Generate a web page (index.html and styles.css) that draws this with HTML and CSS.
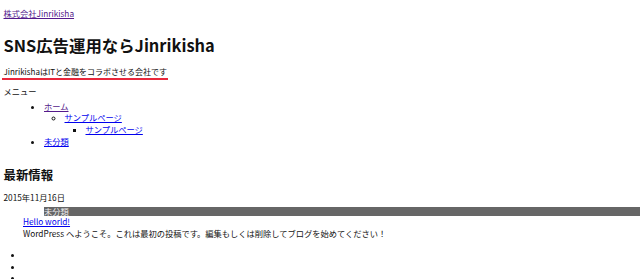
FILE: index.html
```html
<!DOCTYPE html>
<html lang="ja">
<head>
<meta charset="utf-8">
<title>株式会社Jinrikisha</title>
<link rel="stylesheet" href="styles.css">
</head>
<body>
<header class="site-header">
  <p class="site-name"><a class="visited" href="#">株式会社Jinrikisha</a></p>
  <h1 class="site-title">SNS広告運用ならJinrikisha</h1>
  <p class="tagline"><span class="tagline-text">JinrikishaはITと金融をコラボさせる会社です</span></p>
</header>
<nav class="menu">
  <div class="menu-label">メニュー</div>
  <ul class="menu-l1">
    <li><a class="visited" href="#">ホーム</a>
      <ul class="menu-l2">
        <li><a href="#">サンプルページ</a>
          <ul class="menu-l3">
            <li><a href="#">サンプルページ</a></li>
          </ul>
        </li>
      </ul>
    </li>
    <li><a href="#">未分類</a></li>
  </ul>
</nav>
<section class="news">
  <h2 class="news-title">最新情報</h2>
  <div class="post-date">2015年11月16日</div>
  <div class="post-cat">未分類</div>
  <div class="post-body">
    <a href="#">Hello world!</a>
    <p class="post-excerpt">WordPress へようこそ。これは最初の投稿です。編集もしくは削除してブログを始めてください！</p>
  </div>
  <ul class="empty-list">
    <li></li>
    <li></li>
    <li></li>
  </ul>
</section>
</body>
</html>
```

FILE: styles.css
```css
html, body {
  margin: 0;
  padding: 0;
}
body {
  padding: 0 3.5px;
  font-family: "Noto Sans CJK JP", "Noto Sans", sans-serif;
  font-size: 8.25px;
  line-height: 11.7px;
  color: #111;
  background: #fff;
  overflow: hidden;
}
a {
  color: #0000ee;
}
a.visited {
  color: #551a8b;
}
.site-name {
  margin: 7.5px 0 0;
}
.site-title {
  margin: 14px 0 0;
  font-size: 16.4px;
  line-height: 24px;
  font-weight: bold;
}
.tagline {
  margin: 9px 0 0;
}
.tagline-text {
  display: inline-block;
  margin-left: -2px;
  padding: 0 1px 0 2px;
  font-size: 8px;
  border-bottom: 2px solid #e8283c;
}
.menu {
  margin-top: 6px;
}
.menu ul {
  margin: 0;
  list-style: disc;
}
.menu-l1 {
  padding-left: 40.5px;
  margin-top: 3px !important;
}
.menu-l2 {
  padding-left: 20.5px;
  list-style: circle !important;
}
.menu-l3 {
  padding-left: 21px;
  list-style: square !important;
}
.news-title {
  margin: 19px 0 0;
  font-size: 12.4px;
  line-height: 18px;
  font-weight: bold;
}
.post-date {
  margin-top: 8px;
}
.post-cat {
  margin: 2.5px -4px 0 40.5px;
  height: 9.5px;
  line-height: 9.5px;
  background: #666;
  color: #eee;
}
.post-body {
  padding-left: 19.5px;
}
.post-excerpt {
  margin: 0;
}
.empty-list {
  margin: 9.5px 0 0;
  padding-left: 20.5px;
}
.empty-list li {
  height: 11.7px;
}
```
